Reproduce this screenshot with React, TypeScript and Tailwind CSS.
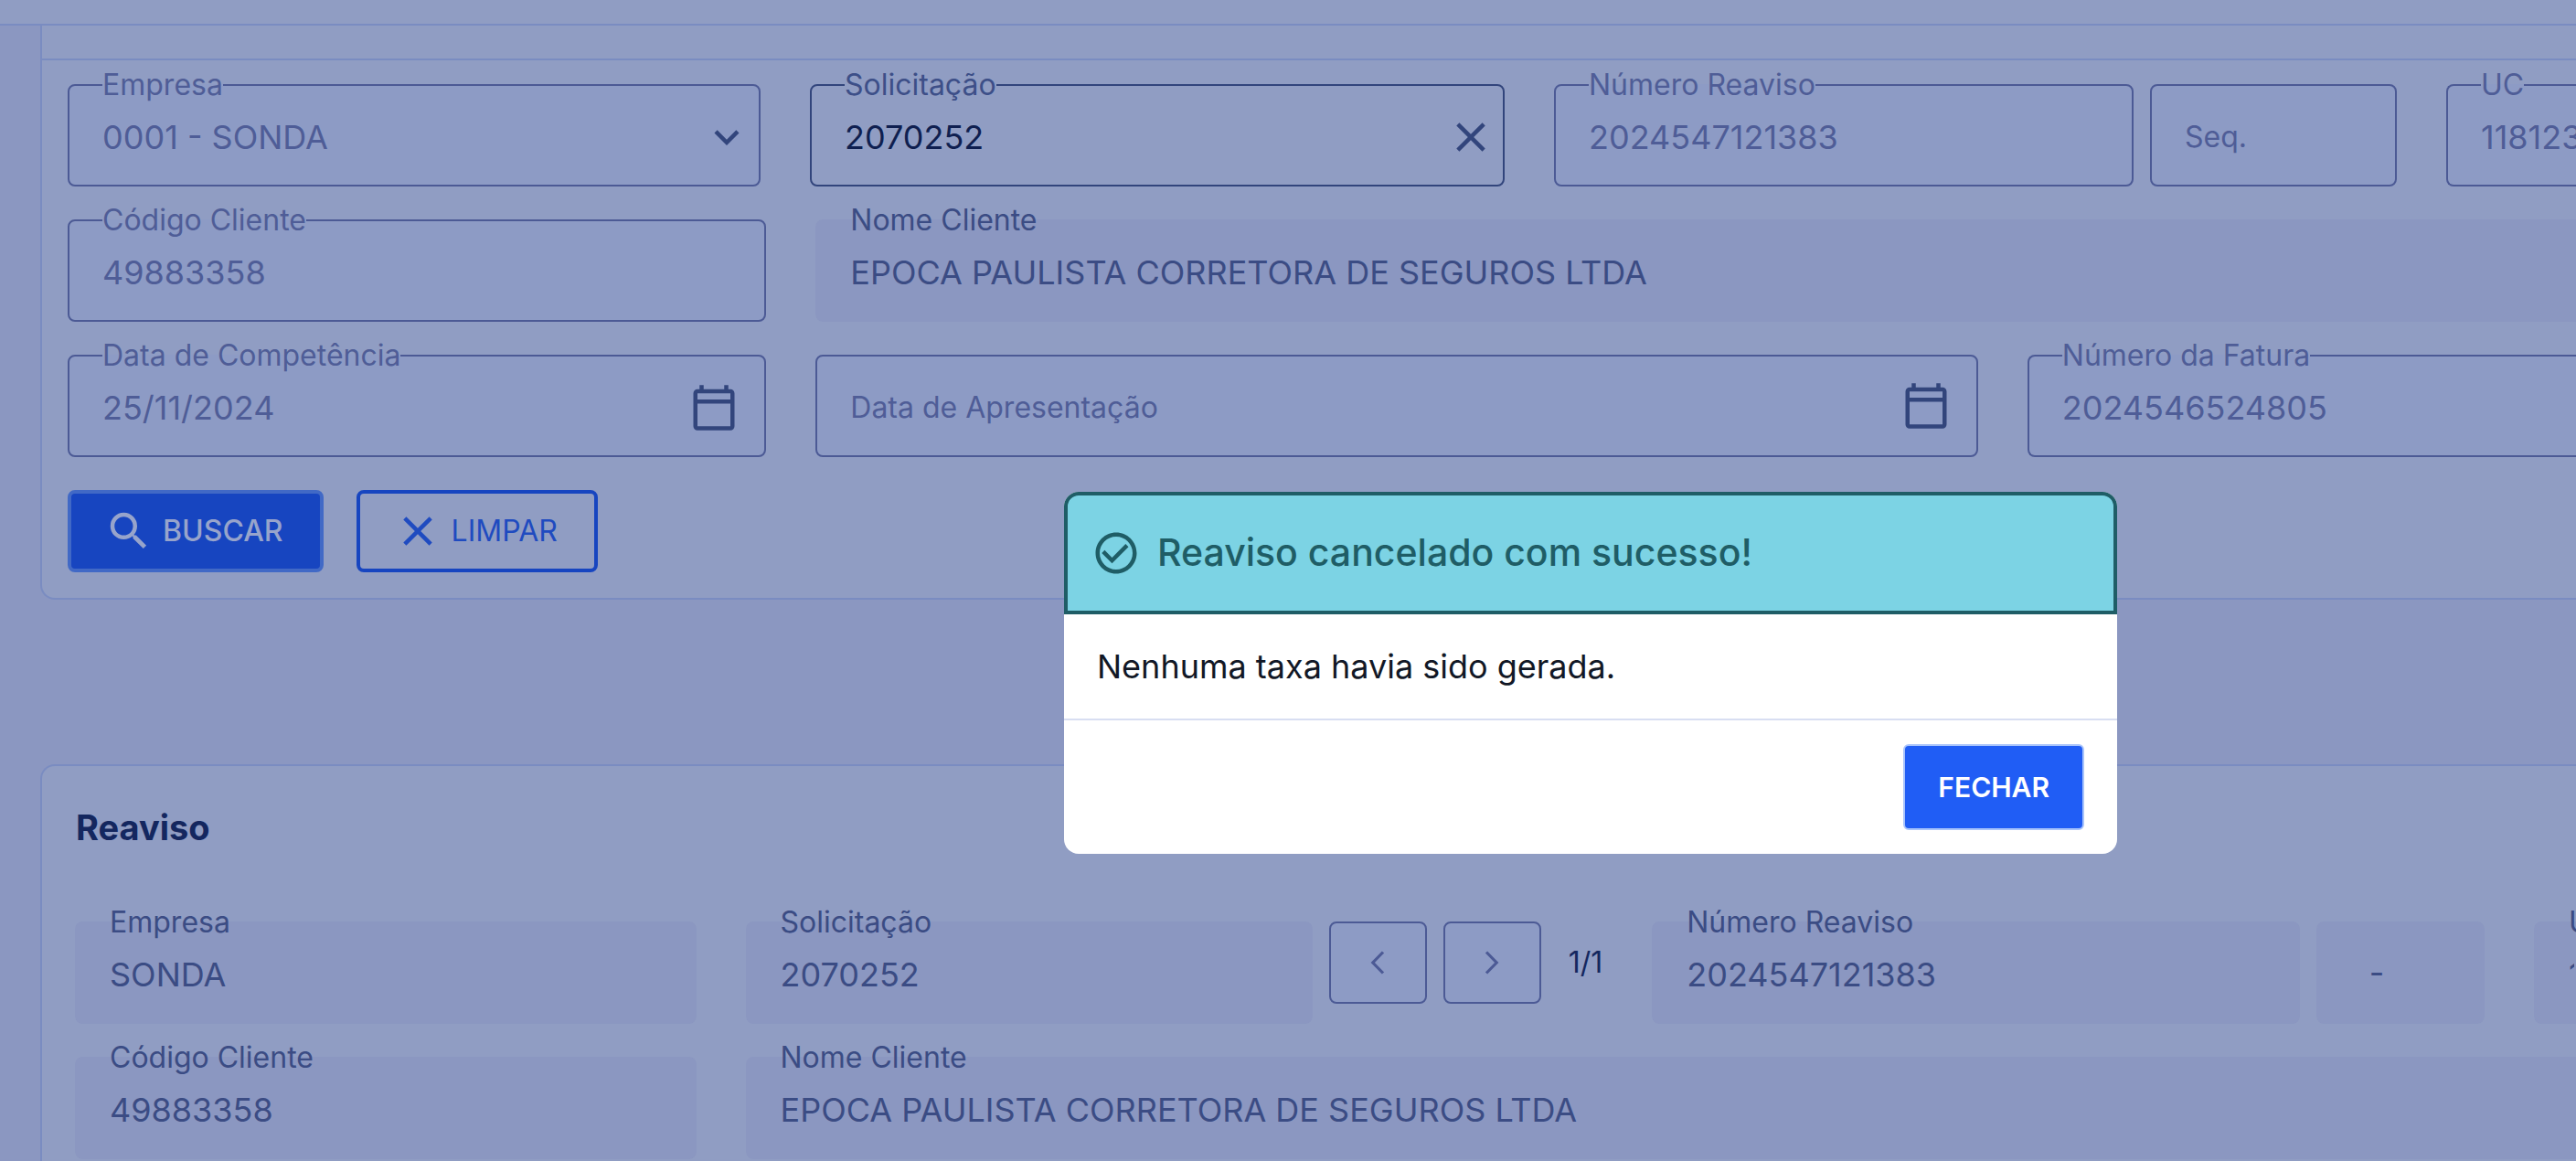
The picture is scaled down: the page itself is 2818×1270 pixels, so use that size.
import React, { useId } from "react";
import {
  MdCheckCircleOutline,
  MdClose,
  MdKeyboardArrowDown,
  MdOutlineCalendarToday,
  MdSearch,
} from "react-icons/md";

type Tone = "disabled" | "active" | "readonly";

const boxTones: Record<Tone, string> = {
  disabled: "border-[#4c5a95] bg-[#8d9bc5]",
  active: "border-[#32457c] bg-transparent",
  readonly: "border-transparent bg-[#8b97c1]",
};

const labelTones: Record<Tone, string> = {
  disabled: "text-[#4f5d97]",
  active: "text-[#3d4f88]",
  readonly: "text-[#3b4c84]",
};

const valueTones: Record<Tone, string> = {
  disabled: "text-[#4f5d97]",
  active: "text-[#0f1f50]",
  readonly: "text-[#3b4c84]",
};

interface FieldProps {
  label?: string;
  name?: string;
  value?: string;
  options?: string[];
  placeholder?: string;
  tone?: Tone;
  className?: string;
  inputClassName?: string;
  children?: React.ReactNode;
}

const Field: React.FC<FieldProps> = ({
  label,
  name,
  value,
  options,
  placeholder,
  tone = "disabled",
  className = "",
  inputClassName = "",
  children,
}) => {
  const id = useId();
  const control = `w-full min-w-0 bg-transparent text-4xl leading-12 outline-none ${valueTones[tone]} ${inputClassName}`;

  return (
    <fieldset
      className={`min-w-0 rounded-lg border-2 pl-9 ${
        label ? "h-[129px]" : "h-28"
      } ${boxTones[tone]} ${className}`}
    >
      {label && (
        <legend className="h-9">
          <label
            htmlFor={id}
            className={`block text-[32px] leading-9 whitespace-nowrap ${labelTones[tone]}`}
          >
            {label}
          </label>
        </legend>
      )}
      <div
        className={`relative flex items-center ${label ? "h-[78px]" : "h-full"}`}
      >
        {options ? (
          <select id={id} className={`appearance-none ${control}`}>
            {options.map((option) => (
              <option key={option}>{option}</option>
            ))}
          </select>
        ) : (
          <input
            id={id}
            type="text"
            aria-label={label ? undefined : name}
            defaultValue={value}
            placeholder={placeholder}
            readOnly={tone !== "active"}
            className={`placeholder:text-[32px] placeholder:text-[#4f5d97] placeholder:opacity-100 ${control}`}
          />
        )}
        {children}
      </div>
    </fieldset>
  );
};

const CalendarButton: React.FC = () => (
  <button type="button" aria-label="Abrir calendário" className="mr-7 shrink-0">
    <MdOutlineCalendarToday className="size-[54px] text-[#32457c]" />
  </button>
);

const SearchForm: React.FC = () => (
  <form
    className="rounded-bl-2xl border-b-2 border-l-2 border-[#7a8cc1] bg-[#909dc3]"
    onSubmit={(e) => e.preventDefault()}
  >
    <div className="h-[38px] border-b-2 border-[#7a8cc1]" />
    <div className="flex flex-col gap-[19px] pt-[9px] pl-7">
      <div className="grid grid-cols-[758fr_760fr_922fr_142fr] items-end gap-[54px]">
        <Field label="Empresa" options={["0001 - SONDA"]}>
          <MdKeyboardArrowDown className="pointer-events-none absolute right-2 size-[54px] text-[#32457c]" />
        </Field>
        <Field label="Solicitação" value="2070252" tone="active">
          <button type="button" aria-label="Limpar solicitação" className="mr-2 shrink-0">
            <MdClose className="size-[54px] text-[#32457c]" />
          </button>
        </Field>
        <div className="grid grid-cols-[634fr_270fr] items-end gap-[18px]">
          <Field label="Número Reaviso" value="2024547121383" />
          <Field name="Sequência" placeholder="Seq." />
        </div>
        <Field
          label="UC"
          value="118123"
          className="rounded-r-none border-r-0"
        />
      </div>

      <div className="grid grid-cols-[764fr_1925fr] items-end gap-[54px]">
        <Field label="Código Cliente" value="49883358" />
        <Field
          label="Nome Cliente"
          value="EPOCA PAULISTA CORRETORA DE SEGUROS LTDA"
          tone="readonly"
          className="rounded-r-none"
        />
      </div>

      <div className="grid grid-cols-[764fr_1271fr_600fr] items-end gap-[54px]">
        <Field label="Data de Competência" value="25/11/2024">
          <CalendarButton />
        </Field>
        <Field name="Data de Apresentação" placeholder="Data de Apresentação">
          <CalendarButton />
        </Field>
        <Field
          label="Número da Fatura"
          value="2024546524805"
          className="rounded-r-none border-r-0"
        />
      </div>
    </div>

    <div className="flex gap-9 pt-9 pb-7 pl-7">
      <button
        type="submit"
        className="flex h-[90px] items-center gap-2.5 rounded-lg border-4 border-[#4169c6] bg-[#1745c0] pr-10 pl-9 text-[32px] font-medium text-[#97a4cb]"
      >
        <MdSearch className="size-[54px]" />
        BUSCAR
      </button>
      <button
        type="reset"
        className="flex h-[90px] items-center gap-2.5 rounded-lg border-4 border-[#1745c0] pr-10 pl-9 text-[32px] text-[#1f4bc0]"
      >
        <MdClose className="size-[54px]" />
        LIMPAR
      </button>
    </div>
  </form>
);

const PagerButton: React.FC<{ label: string; path: string }> = ({
  label,
  path,
}) => (
  <button
    type="button"
    aria-label={label}
    className="flex h-[90px] w-[107px] shrink-0 items-center justify-center rounded-lg border-2 border-[#4c5a95] bg-[#8d9bc5] text-[#4c5a95]"
  >
    <svg
      viewBox="0 0 16 26"
      className="h-[26px] w-4"
      fill="none"
      stroke="currentColor"
      strokeWidth="3.2"
    >
      <path d={path} />
    </svg>
  </button>
);

const ReavisoCard: React.FC = () => (
  <section className="rounded-tl-2xl border-t-2 border-l-2 border-[#7a8cc1] bg-[#909dc3] pt-10 pl-9">
    <h2 className="pl-px text-[38px] leading-[54px] font-bold text-[#14275f]">
      Reaviso
    </h2>
    <div className="flex flex-col gap-[19px] pt-[59px]">
      <div className="grid grid-cols-[679fr_937fr_910fr_46fr] items-end gap-[54px]">
        <Field label="Empresa" value="SONDA" tone="readonly" />
        <div className="flex items-end gap-[18px]">
          <Field
            label="Solicitação"
            value="2070252"
            tone="readonly"
            className="flex-1"
          />
          <div className="flex h-28 items-start gap-[18px]">
            <PagerButton label="Anterior" path="M14 1.5 2.8 13 14 24.5" />
            <PagerButton label="Próximo" path="M2 1.5 13.2 13 2 24.5" />
            <span className="pl-3 text-[32px] leading-[90px] text-[#14275f]">
              1/1
            </span>
          </div>
        </div>
        <div className="grid grid-cols-[708fr_184fr] items-end gap-[18px]">
          <Field
            label="Número Reaviso"
            value="2024547121383"
            tone="readonly"
          />
          <Field
            name="Sequência"
            value="-"
            tone="readonly"
            inputClassName="pl-5"
          />
        </div>
        <Field
          label="UC"
          value="118123"
          tone="readonly"
          className="rounded-r-none"
        />
      </div>

      <div className="grid grid-cols-[679fr_2001fr] items-end gap-[54px]">
        <Field label="Código Cliente" value="49883358" tone="readonly" />
        <Field
          label="Nome Cliente"
          value="EPOCA PAULISTA CORRETORA DE SEGUROS LTDA"
          tone="readonly"
          className="rounded-r-none"
        />
      </div>
    </div>
    <div className="h-9" />
  </section>
);

const SuccessDialog: React.FC = () => (
  <div className="fixed inset-0 flex items-center justify-center pt-[202px] pl-[662px]">
    <div
      role="dialog"
      aria-modal="true"
      aria-labelledby="dialog-title"
      className="w-full max-w-6xl rounded-2xl bg-white"
    >
      <header className="flex h-[134px] items-center gap-[18px] rounded-t-2xl border-4 border-[#1f5d66] bg-[#7cd3e4] px-[26px] text-[#1f5d66]">
        <MdCheckCircleOutline className="size-[54px]" />
        <h1 id="dialog-title" className="text-[41px] font-medium">
          Reaviso cancelado com sucesso!
        </h1>
      </header>
      <p className="border-b-2 border-[#d8def2] px-9 py-8 text-4xl leading-[50px] text-[#121826]">
        Nenhuma taxa havia sido gerada.
      </p>
      <footer className="flex justify-end px-9 py-[26px]">
        <button
          type="button"
          className="h-[94px] rounded-md border-2 border-[#a9c4fb] bg-[#205df5] px-9 text-[30px] font-semibold text-white"
        >
          FECHAR
        </button>
      </footer>
    </div>
  </div>
);

const App: React.FC = () => {
  return (
    <div className="h-screen overflow-hidden bg-[#8b97c1] font-['Inter',sans-serif]">
      <div className="h-7 border-b-2 border-[#7a8cc1] bg-[#909dc3]" />
      <main className="flex flex-col gap-[180px] pl-11">
        <SearchForm />
        <ReavisoCard />
      </main>
      <SuccessDialog />
    </div>
  );
};

export default App;
